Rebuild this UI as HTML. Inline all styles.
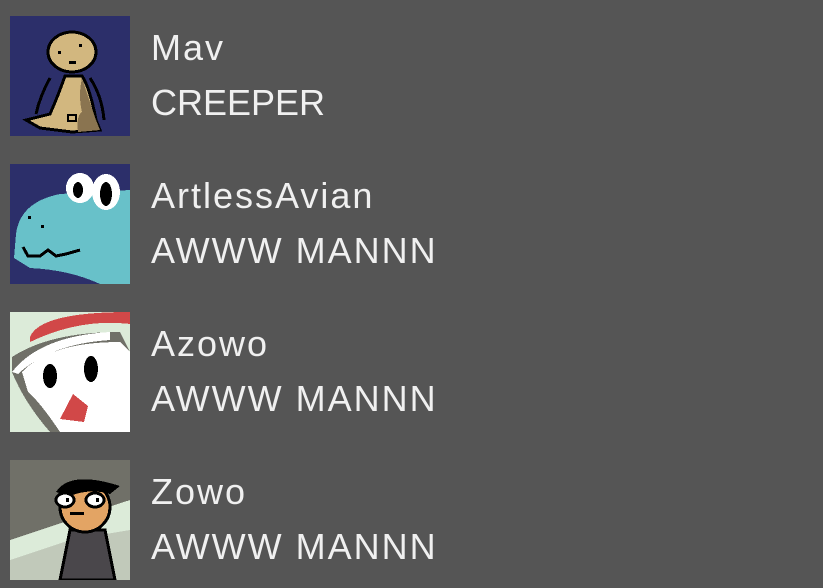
<!DOCTYPE html>
<html><head><style>
html,body{margin:0;padding:0;background:#555555;width:823px;height:588px;overflow:hidden}
.row{position:absolute;left:10px;width:800px;height:120px}
.av{position:absolute;left:0;top:0;width:120px;height:120px}
.t{position:absolute;left:141px;font-family:"Liberation Sans","DejaVu Sans",sans-serif;font-size:36px;color:#f0f0f0;line-height:36px;white-space:nowrap;letter-spacing:2px}
.n{top:14px}.s{top:69px}
</style></head><body>
<div class="row" style="top:16px">
<svg class="av" viewBox="0 0 120 120" shape-rendering="crispEdges"><rect width="120" height="120" fill="#2c2f6a"/>
<path d="M40 62 Q30 80 26 98 M80 62 Q92 80 94 104" stroke="#000" stroke-width="3" fill="none"/>
<path d="M55 60 L72 60 Q80 72 86 104 L90 114 L62 116 L30 112 L16 104 L40 98 Q48 80 55 60Z" fill="#d2b77f" stroke="#000" stroke-width="3"/>
<path d="M72 62 Q78 80 86 104 L90 114 L68 116 Q66 100 72 96 Q68 80 72 62Z" fill="#8a7450"/>
<ellipse cx="62" cy="36" rx="24" ry="20" fill="#d2b77f" stroke="#000" stroke-width="3"/>
<rect x="48" y="35" width="3" height="3"/><rect x="69" y="28" width="3" height="3"/><rect x="59" y="45" width="7" height="3"/>
<rect x="58" y="99" width="8" height="6" fill="none" stroke="#000" stroke-width="2"/></svg>
<div class="t n">Mav</div><div class="t s" style="letter-spacing:0">CREEPER</div></div>
<div class="row" style="top:164px">
<svg class="av" viewBox="0 0 120 120" shape-rendering="crispEdges"><rect width="120" height="120" fill="#2c2f6a"/>
<path d="M6 70 Q10 38 50 30 L120 26 L120 120 L90 120 Q60 106 20 104 L4 94Z" fill="#68c1c9"/>
<ellipse cx="70" cy="24" rx="14" ry="15" fill="#fff"/><ellipse cx="96" cy="28" rx="14" ry="18" fill="#fff"/>
<ellipse cx="68" cy="26" rx="5" ry="8" fill="#000"/><ellipse cx="96" cy="30" rx="6" ry="12" fill="#000"/>
<rect x="18" y="52" width="3" height="3"/><rect x="31" y="61" width="3" height="3"/>
<path d="M13 83 L18 92 L30 92 L38 86 L46 92 L56 90 L70 86" stroke="#000" stroke-width="3" fill="none"/></svg>
<div class="t n">ArtlessAvian</div><div class="t s">AWWW MANNN</div></div>
<div class="row" style="top:312px">
<svg class="av" viewBox="0 0 120 120" shape-rendering="crispEdges"><rect width="120" height="120" fill="#dcebd9"/>
<path d="M20 25 Q30 0 120 0 L120 12 Q70 6 20 30Z" fill="#d14848"/>
<path d="M2 45 Q40 20 110 20 L120 40 L120 120 L40 120 Q14 90 2 60Z" fill="#707068"/>
<path d="M12 60 Q40 30 110 30 L120 40 L120 120 L50 120 Q30 90 18 80Z" fill="#fff"/>
<path d="M2 60 Q30 24 100 20 L100 28 Q40 32 8 62Z" fill="#fff"/>
<ellipse cx="40" cy="64" rx="7" ry="12"/><ellipse cx="81" cy="57" rx="7" ry="13"/>
<path d="M50 107 L63 82 L78 94 L74 110Z" fill="#d14848"/></svg>
<div class="t n">Azowo</div><div class="t s">AWWW MANNN</div></div>
<div class="row" style="top:460px">
<svg class="av" viewBox="0 0 120 120" shape-rendering="crispEdges"><rect width="120" height="120" fill="#707068"/>
<path d="M0 80 L120 40 L120 120 L0 120Z" fill="#dcebd9"/>
<path d="M0 100 L60 80 L120 70 L120 120 L0 120Z" fill="#a6a89c" opacity=".5"/>
<path d="M60 70 L95 70 L105 120 L50 120Z" fill="#4a474b" stroke="#000" stroke-width="3"/>
<circle cx="75" cy="47" r="25" fill="#e3a464" stroke="#000" stroke-width="3"/>
<path d="M46 32 Q60 10 110 26 L100 34 Q80 28 60 36Z" fill="#000"/>
<ellipse cx="55" cy="40" rx="9" ry="7" fill="#fff" stroke="#000" stroke-width="3"/>
<ellipse cx="85" cy="40" rx="9" ry="7" fill="#fff" stroke="#000" stroke-width="3"/>
<rect x="56" y="38" width="3" height="4"/><rect x="86" y="38" width="3" height="4"/>
<rect x="60" y="52" width="14" height="3"/></svg>
<div class="t n">Zowo</div><div class="t s">AWWW MANNN</div></div>
</body></html>
